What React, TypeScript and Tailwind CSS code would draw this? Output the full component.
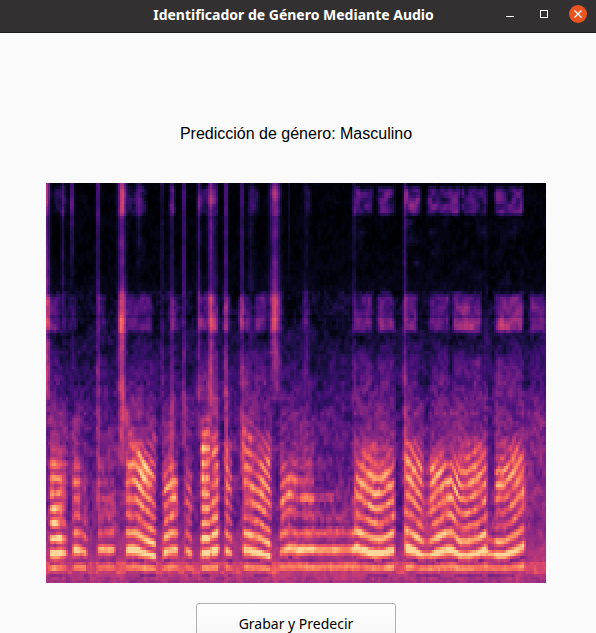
import { useMemo } from "react";

type Point = [number, number];

interface Voice {
  from: number;
  to: number;
  pitch: Point[]; // distance between harmonics along x
  gain: number;
  top: number; // highest row with clear harmonics
  upper: number; // strength of the upper harmonics
}

interface Patch {
  from: number;
  to: number;
  level: number;
}

const COLS = 250;
const ROWS = 133;
const LEVELS = 72;

const MAGMA: [number, number, number][] = [
  [0, 0, 4],
  [11, 9, 36],
  [32, 17, 75],
  [59, 15, 112],
  [87, 21, 126],
  [114, 31, 129],
  [140, 41, 129],
  [168, 50, 125],
  [196, 60, 117],
  [222, 73, 104],
  [241, 96, 93],
  [250, 127, 94],
  [254, 159, 109],
  [254, 191, 132],
  [253, 222, 160],
  [252, 253, 191],
];

const VOICES: Voice[] = [
  { from: 4, to: 16, pitch: [[4, 15], [16, 15]], gain: 1.05, top: 270, upper: 1 },
  { from: 16, to: 21, pitch: [[16, 15], [21, 15]], gain: 0.75, top: 275, upper: 0.6 },
  { from: 27, to: 34, pitch: [[27, 17], [34, 17]], gain: 0.95, top: 280, upper: 0.75 },
  { from: 34, to: 41, pitch: [[34, 17], [41, 15]], gain: 0.78, top: 290, upper: 0.25 },
  { from: 52, to: 69, pitch: [[52, 17], [69, 17]], gain: 0.88, top: 285, upper: 0.3 },
  { from: 80, to: 110, pitch: [[80, 17], [90, 17], [98, 15], [110, 13]], gain: 0.98, top: 262, upper: 0.75 },
  { from: 117, to: 132, pitch: [[117, 15], [126, 17], [132, 17]], gain: 0.85, top: 275, upper: 0.75 },
  { from: 139, to: 146, pitch: [[139, 17], [146, 15]], gain: 0.8, top: 275, upper: 0.5 },
  { from: 155, to: 164, pitch: [[155, 15], [164, 15]], gain: 1.05, top: 240, upper: 0.9 },
  { from: 165, to: 173, pitch: [[165, 16], [173, 17]], gain: 0.95, top: 255, upper: 0.7 },
  { from: 179, to: 186, pitch: [[179, 17], [186, 15]], gain: 0.95, top: 255, upper: 0.55 },
  { from: 197, to: 207, pitch: [[197, 17], [207, 16]], gain: 0.95, top: 240, upper: 0.75 },
  { from: 207, to: 225, pitch: [[207, 16], [215, 15], [225, 13]], gain: 0.95, top: 255, upper: 0.65 },
  { from: 234, to: 252, pitch: [[234, 16], [244, 18], [252, 17]], gain: 0.83, top: 275, upper: 0.7 },
  { from: 252, to: 268, pitch: [[252, 17], [268, 17]], gain: 1.03, top: 275, upper: 0.4 },
  { from: 268, to: 309, pitch: [[268, 17], [309, 17]], gain: 0.95, top: 320, upper: 0.18 },
  { from: 309, to: 349, pitch: [[309, 18], [314, 17], [328, 15], [336, 15], [349, 17]], gain: 0.98, top: 265, upper: 0.8 },
  { from: 359, to: 377, pitch: [[359, 18], [365, 17], [377, 14]], gain: 1, top: 262, upper: 0.8 },
  { from: 377, to: 384, pitch: [[377, 14], [384, 14]], gain: 0.9, top: 290, upper: 0.4 },
  { from: 384, to: 441, pitch: [[384, 14], [400, 17], [406, 17], [414, 14], [421, 14], [432, 15], [441, 17]], gain: 0.95, top: 265, upper: 0.8 },
  { from: 441, to: 449, pitch: [[441, 15], [449, 14]], gain: 0.85, top: 340, upper: 0.3 },
  { from: 449, to: 479, pitch: [[449, 14], [458, 14], [468, 16], [479, 19]], gain: 0.92, top: 262, upper: 0.78 },
];

// x, half width, strength, lowest row of the click line
const CLICKS: [number, number, number, number][] = [
  [1, 3, 0.42, 200],
  [17, 2, 0.17, 90],
  [26, 2, 0.24, 60],
  [52, 2, 0.26, 300],
  [76, 4, 0.42, 240],
  [93, 3, 0.14, 40],
  [116, 1, 0.26, 200],
  [126, 2, 0.18, 270],
  [138, 2, 0.27, 240],
  [153, 2, 0.2, 220],
  [165, 3, 0.34, 200],
  [170, 2, 0.14, 260],
  [180, 2, 0.3, 280],
  [196, 2, 0.25, 260],
  [205, 3, 0.1, 150],
  [229, 5, 0.37, 170],
  [243, 1, 0.08, 50],
  [260, 3, 0.07, 270],
  [308, 1, 0.24, 360],
  [359, 2, 0.22, 340],
  [440, 2, 0.06, 400],
];

const MID_PATCHES: Patch[] = [
  { from: 0, to: 14, level: 0.2 },
  { from: 16, to: 30, level: 0.06 },
  { from: 51, to: 59, level: 0.11 },
  { from: 73, to: 106, level: 0.16 },
  { from: 124, to: 132, level: 0.12 },
  { from: 152, to: 172, level: 0.2 },
  { from: 177, to: 184, level: 0.16 },
  { from: 193, to: 203, level: 0.17 },
  { from: 209, to: 220, level: 0.2 },
  { from: 224, to: 236, level: 0.15 },
  { from: 257, to: 263, level: 0.14 },
  { from: 308, to: 326, level: 0.23 },
  { from: 332, to: 348, level: 0.25 },
  { from: 358, to: 371, level: 0.24 },
  { from: 384, to: 403, level: 0.23 },
  { from: 407, to: 435, level: 0.28 },
  { from: 449, to: 477, level: 0.3 },
  { from: 484, to: 500, level: 0.2 },
];

const HIGH_PATCHES: Patch[] = [
  { from: 8, to: 22, level: 0.09 },
  { from: 24, to: 29, level: 0.07 },
  { from: 74, to: 100, level: 0.13 },
  { from: 123, to: 129, level: 0.14 },
  { from: 152, to: 172, level: 0.12 },
  { from: 202, to: 213, level: 0.12 },
  { from: 225, to: 234, level: 0.08 },
  { from: 259, to: 265, level: 0.09 },
  { from: 308, to: 327, level: 0.19 },
  { from: 332, to: 349, level: 0.2 },
  { from: 359, to: 374, level: 0.26 },
  { from: 382, to: 414, level: 0.22 },
  { from: 415, to: 440, level: 0.18 },
  { from: 449, to: 477, level: 0.21 },
];

const FLOOR: Point[] = [
  [0, 0.01],
  [60, 0.015],
  [90, 0.025],
  [112, 0.05],
  [125, 0.08],
  [150, 0.1],
  [170, 0.13],
  [195, 0.18],
  [220, 0.22],
  [260, 0.28],
  [300, 0.3],
  [345, 0.34],
  [350, 0.39],
  [365, 0.43],
  [385, 0.5],
  [390, 0.5],
  [400, 0.45],
];

function lerp(points: Point[], x: number): number {
  if (x <= points[0][0]) return points[0][1];
  for (let i = 1; i < points.length; i++) {
    const [x1, y1] = points[i];
    const [x0, y0] = points[i - 1];
    if (x <= x1) return y0 + ((y1 - y0) * (x - x0)) / (x1 - x0);
  }
  return points[points.length - 1][1];
}

function hash(x: number, y: number): number {
  let n = Math.imul(x + 71, 374761393) + Math.imul(y + 13, 668265263);
  n = Math.imul(n ^ (n >>> 13), 1274126177);
  return ((n ^ (n >>> 16)) >>> 0) / 4294967296;
}

function smooth(x: number, y: number): number {
  const ix = Math.floor(x);
  const iy = Math.floor(y);
  const fx = x - ix;
  const fy = y - iy;
  const a = hash(ix, iy) * (1 - fx) + hash(ix + 1, iy) * fx;
  const b = hash(ix, iy + 1) * (1 - fx) + hash(ix + 1, iy + 1) * fx;
  return a * (1 - fy) + b * fy - 0.5;
}

function edge(x: number, from: number, to: number, soft: number): number {
  return Math.max(0, Math.min(1, (x - from) / soft + 0.5, (to - x) / soft + 0.5));
}

function patchLevel(patches: Patch[], x: number): number {
  return patches.reduce((max, p) => Math.max(max, p.level * edge(x, p.from, p.to, 4)), 0);
}

function intensity(x: number, y: number): number {
  const height = 400 - y;
  let v = lerp(FLOOR, y);

  const mid = patchLevel(MID_PATCHES, x);
  const midShape = edge(y, 112, 149, 7) * (y > 135 ? 1.1 : 0.9) + edge(y, 168, 205, 24) * 0.36;
  v += mid * midShape * (1 + smooth(x / 6, y / 9) * 0.9);
  v += patchLevel(HIGH_PATCHES, x) * edge(y, 5, 32, 7) * (1 + smooth(x / 4, y / 6) * 1.6);
  if (y > 35 && y < 112) {
    v += patchLevel(HIGH_PATCHES, x) * Math.max(0, smooth(x / 7 + 40, y / 10)) * 0.8;
  }

  for (const [cx, w, strength, end] of CLICKS) {
    const d = Math.abs(x - cx) / w;
    if (d > 2) continue;
    const fade = y > end ? Math.max(0.15, 1 - (y - end) / 60) : 1;
    const boost = y > 111 && y < 150 ? 0.8 : y < 35 ? 0.95 : 0.75;
    v += strength * Math.exp(-d * d * 1.1) * fade * boost * (1 + smooth(cx, y / 10) * 0.5);
  }
  if (Math.abs(x - 76) < 4 && y > 112 && y < 152) v += 0.07;

  // resonance that glides down into the fourth voiced part
  const glide = lerp([[195, 76], [235, 80], [262, 90], [285, 98], [320, 104]], y);
  v += 0.15 * edge(y, 225, 310, 40) * Math.exp(-Math.pow((x - glide) / 5, 2));

  let voiced = 0;
  for (const voice of VOICES) {
    const inside = edge(x, voice.from, voice.to, 3);
    if (inside === 0) continue;
    voiced = Math.max(voiced, inside);
    const mix = Math.min(1, height / 34);
    const pitch = lerp(voice.pitch, x) * mix + 16 * (1 - mix);
    const h = height / pitch;
    const wave = 0.5 + 0.5 * Math.cos(2 * Math.PI * h);
    const fade = Math.max(0, Math.min(1, (y - voice.top + 15) / 40));
    let amp = 0;
    if (h > 0.5 && h < 1.5) amp = 0.36;
    else if (h < 2.5 && h >= 1.5) amp = 0.46;
    else if (h < 3.5 && h >= 2.5) amp = 0.42 * Math.max(0.55, voice.upper + 0.15);
    else if (h >= 3.5) amp = 0.36 * voice.upper * fade;
    amp *= 1 + smooth(x / 7 + 9, y / 16) * (h > 3.5 ? 1.2 : 0.4);
    v += inside * voice.gain * amp * (wave - 0.25);
    if (h > 1.5) v += inside * 0.05 * voice.gain * fade;
    if (h >= 1.5) v += inside * 0.17 * fade * voice.upper * (1 + smooth(x / 8, y / 24) * 0.8);
    v += inside * 0.14 * edge(y, voice.top - 55, 320, 40) * voice.upper * (1 + smooth(x / 6 + 30, y / 30));
  }

  if (x > 254 && x < 289 && Math.abs(y - 314) < 4) v += 0.12;
  if (voiced < 0.5 && y > 379 && y < 391) v += 0.08;
  if (x > 480) {
    v += 0.13 * Math.exp(-Math.pow((x - 493) / 8, 2) - Math.pow((y - 236) / 8, 2));
    v += 0.07 * edge(y, 215, 350, 40);
  }
  if (x > 349 && x < 357 && y > 195 && y < 350) v -= 0.04;
  if (Math.abs(y - 134) < 2) v -= 0.03;

  const grain = y < 110 ? 0.05 : y < 200 ? 0.13 : y < 350 ? 0.19 : 0.12;
  v += smooth(x / 3, y / 5) * grain + smooth(x / 12, y / 14) * grain * 0.6;
  return Math.max(0, Math.min(0.92, v));
}

function magma(t: number): string {
  const p = t * (MAGMA.length - 1);
  const i = Math.min(MAGMA.length - 2, Math.floor(p));
  const rgb = MAGMA[i].map((c, k) => Math.round(c + (MAGMA[i + 1][k] - c) * (p - i)));
  return `rgb(${rgb.join(",")})`;
}

function buildLayers(): { color: string; d: string }[] {
  const paths: string[][] = Array.from({ length: LEVELS }, () => []);
  for (let row = 0; row < ROWS; row++) {
    let start = 0;
    let level = -1;
    for (let col = 0; col <= COLS; col++) {
      const next =
        col < COLS ? Math.round(intensity(col * 2 + 1, row * 3 + 2) * (LEVELS - 1)) : -1;
      if (next !== level) {
        if (level >= 0) paths[level].push(`M${start} ${row}h${col - start}v1h${start - col}z`);
        start = col;
        level = next;
      }
    }
  }
  return paths.map((p, i) => ({ color: magma(i / (LEVELS - 1)), d: p.join("") }));
}

function Spectrogram() {
  const layers = useMemo(buildLayers, []);
  return (
    <svg
      role="img"
      aria-label="Espectrograma"
      viewBox={`0 0 ${COLS} ${ROWS}`}
      preserveAspectRatio="none"
      shapeRendering="crispEdges"
      className="h-[400px] w-full max-w-[500px] bg-black"
    >
      {layers.map((layer) => (
        <path key={layer.color} d={layer.d} fill={layer.color} />
      ))}
    </svg>
  );
}

function TitleBar() {
  return (
    <header className="grid h-[33px] shrink-0 grid-cols-[1fr_auto_1fr] items-center border-b border-[#1e1c1c] bg-[#333031] pr-[9px] pb-1 text-white">
      <h1 className="col-start-2 pt-px font-['Noto_Sans','Open_Sans',sans-serif] text-sm font-bold">
        Identificador de Género Mediante Audio
      </h1>
      <div className="flex items-center justify-end gap-4">
        <button type="button" aria-label="Minimizar" className="size-[18px]">
          <svg viewBox="0 0 18 18" className="size-full" shapeRendering="crispEdges">
            <path d="M5 11h8v1H5z" fill="currentColor" />
          </svg>
        </button>
        <button type="button" aria-label="Maximizar" className="size-[18px]">
          <svg viewBox="0 0 18 18" className="size-full" shapeRendering="crispEdges">
            <path d="M5 5h8v8H5zM6 6v6h6V6z" fill="currentColor" fillRule="evenodd" />
          </svg>
        </button>
        <button type="button" aria-label="Cerrar" className="size-[18px] rounded-full bg-[#e95420]">
          <svg viewBox="0 0 18 18" className="size-full">
            <path d="M5.5 5.5l7 7M12.5 5.5l-7 7" stroke="currentColor" strokeWidth="1.3" />
          </svg>
        </button>
      </div>
    </header>
  );
}

export default function App() {
  return (
    <div className="flex h-screen flex-col overflow-hidden bg-[#fafafa]">
      <TitleBar />
      <main className="flex flex-col items-center pt-[89px] pr-1">
        <p className="font-['Liberation_Sans',Arial,sans-serif] text-base text-black">
          Predicción de género: Masculino
        </p>
        <div className="mt-[37px] flex w-full justify-center">
          <Spectrogram />
        </div>
        <button
          type="button"
          className="mt-5 h-[42px] w-[200px] shrink-0 rounded-[3px] border border-[#b0b0b0] bg-linear-to-b from-white to-[#f4f4f4] font-['Noto_Sans','Open_Sans',sans-serif] text-sm text-black"
        >
          Grabar y Predecir
        </button>
      </main>
    </div>
  );
}
